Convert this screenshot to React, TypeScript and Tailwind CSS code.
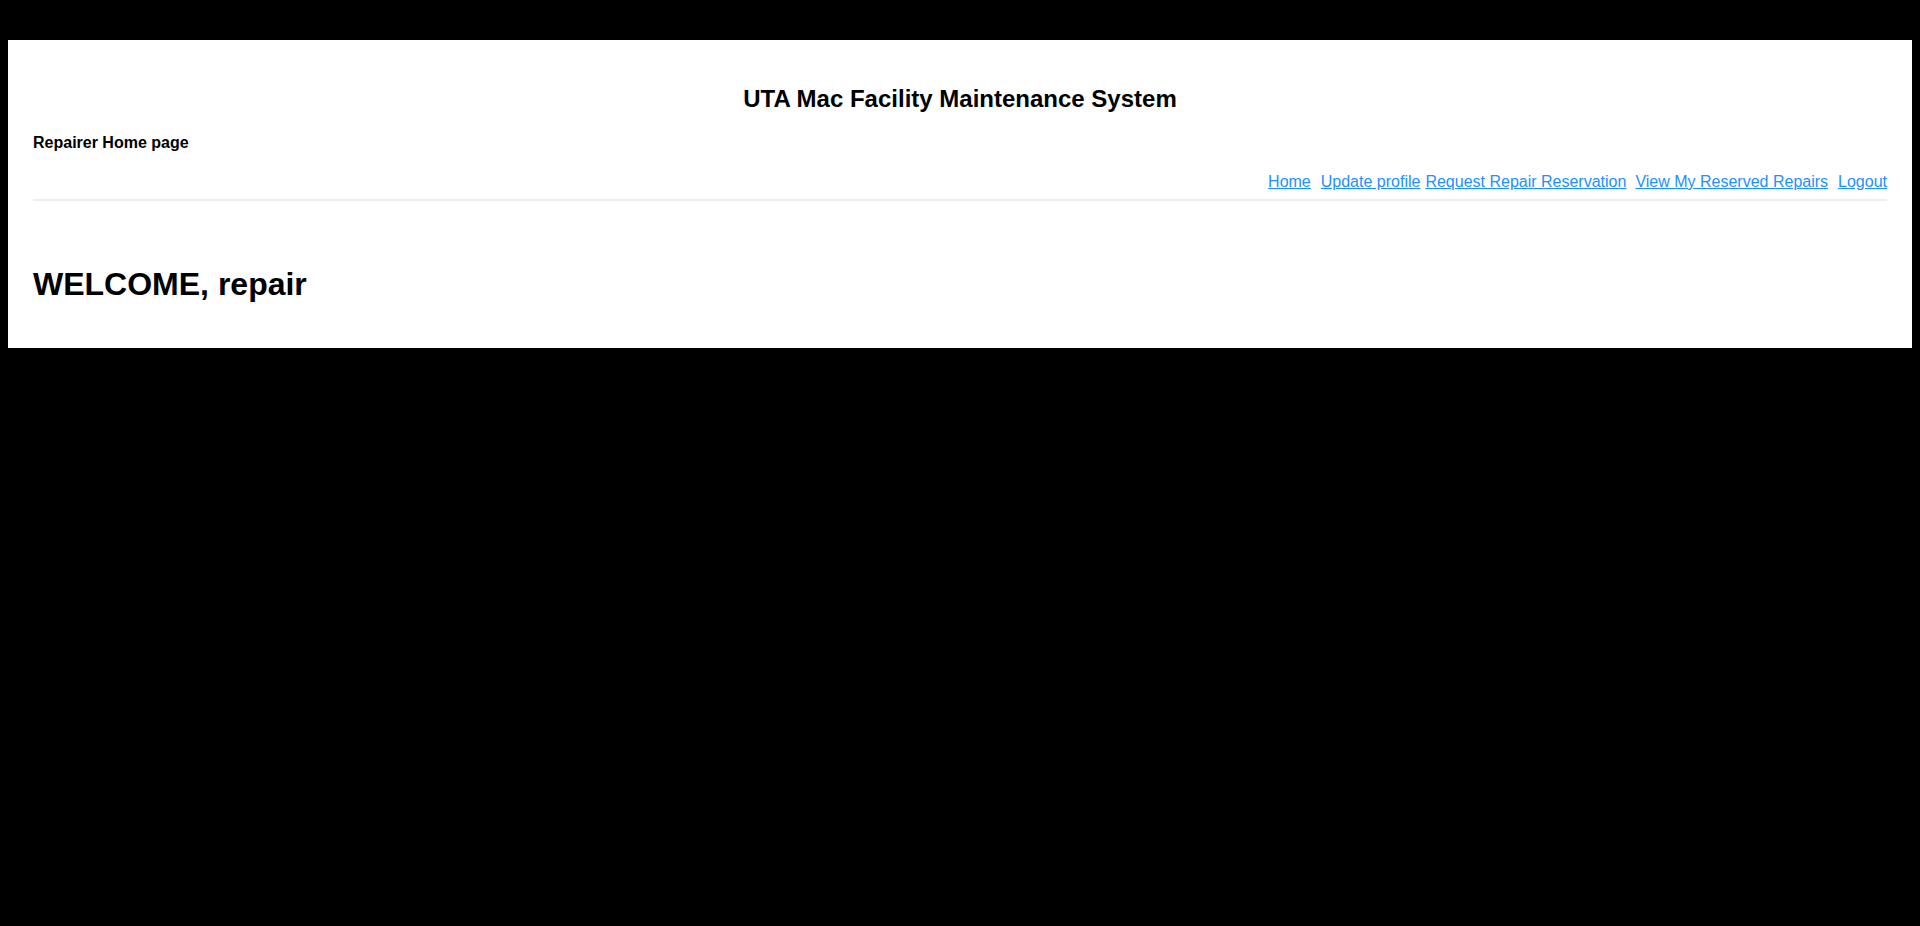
import React from "react";

const links = [
  { label: "Home", gap: "" },
  { label: "Update profile", gap: "ml-[10px]" },
  { label: "Request Repair Reservation", gap: "ml-[5px]" },
  { label: "View My Reserved Repairs", gap: "ml-[9px]" },
  { label: "Logout", gap: "ml-[10px]" },
];

const App: React.FC = () => {
  return (
    <div className="min-h-screen w-full bg-black pt-[40px] px-[8px] font-['Liberation_Sans',Arial,sans-serif] text-black">
      <div className="bg-white px-[25px] pt-[45px] pb-[45px]">
        {/* Header */}
        <h2 className="text-center text-[24px] font-bold leading-[1.15]">
          UTA Mac Facility Maintenance System
        </h2>
        <h4 className="mt-[21px] text-[16px] font-bold leading-[1.15]">Repairer Home page</h4>

        {/* Nav */}
        <div className="mt-[21px] flex justify-end pb-[8px] border-b-2 border-[#eeeeee]">
          {links.map((l) => (
            <a
              key={l.label}
              href="#"
              className={`${l.gap} text-[16px] leading-[1.15] text-[#1e90ff] underline`}
            >
              {l.label}
            </a>
          ))}
        </div>

        {/* Body */}
        <h1 className="mt-[65px] text-[32px] font-bold leading-[1.15]">WELCOME, repair</h1>
      </div>
    </div>
  );
};

export default App;
